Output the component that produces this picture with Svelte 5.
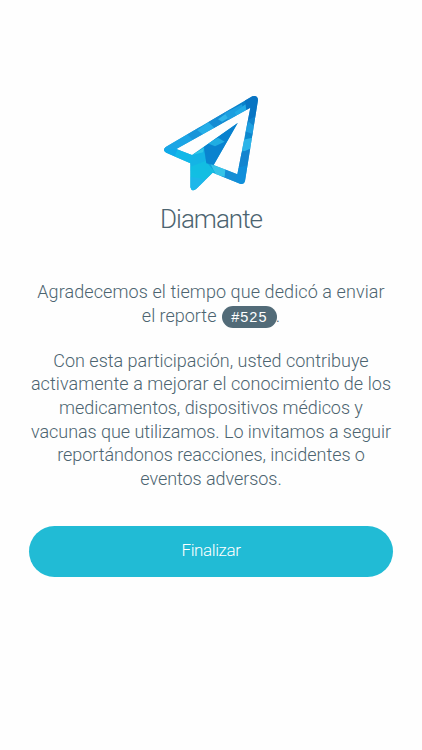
<script>
  const reportNumber = 525;

  const messageLines = [
    { text: 'Con esta participación, usted contribuye', spacing: -0.01 },
    { text: 'activamente a mejorar el conocimiento de los', spacing: 0.06 },
    { text: 'medicamentos, dispositivos médicos y', spacing: -0.04 },
    { text: 'vacunas que utilizamos. Lo invitamos a seguir', spacing: -0.05 },
    { text: 'reportándonos reacciones, incidentes o', spacing: -0.05 },
    { text: 'eventos adversos.', spacing: -0.06 }
  ];

  // Coloured facets of the logo, clipped to the plane outline
  const facets = [
    { points: '20,195 100,135 145,145 65,205', color: '#1fa5e8' },
    { points: '90,140 130,120 165,145 120,170', color: '#1c94da' },
    { points: '128,136 160,112 190,122 150,152', color: '#2bb5ed' },
    { points: '160,110 230,70 240,90 180,130', color: '#188bd4' },
    { points: '190,103 213,86 223,98 202,110', color: '#39c0f0' },
    { points: '210,85 262,58 268,85 225,108', color: '#22a5e4' },
    { points: '240,82 273,58 288,74 250,100', color: '#29b6ed' },
    { points: '270,40 315,20 315,105 280,110', color: '#0872c2' },
    { points: '270,110 310,90 304,155 268,145', color: '#1185ce' },
    { points: '282,110 302,126 292,146 270,139', color: '#22a5e5' },
    { points: '262,165 300,157 287,205 258,195', color: '#35bfee' },
    { points: '255,205 290,190 280,255 248,245', color: '#1681cf' },
    { points: '245,250 280,240 276,305 238,300', color: '#118ddb' },
    { points: '205,245 245,250 245,305 200,275', color: '#188bd4' },
    { points: '168,238 212,252 210,275 184,270', color: '#40cdec' },
    { points: '20,195 65,190 112,210 108,240', color: '#0fabec' },
    { points: '68,194 112,207 120,245 60,215', color: '#12bdeb' },
    { points: '107,212 147,190 155,232 107,258', color: '#16b8e8' },
    { points: '107,245 153,228 180,260 107,320', color: '#13c5e4' },
    { points: '107,275 135,280 160,290 107,322', color: '#20bbed' },
    { points: '148,185 250,110 180,240 155,235', color: '#087ecd' },
    { points: '158,175 190,158 210,170 181,184', color: '#25b3e5' },
    { points: '112,210 148,188 145,202', color: '#39d1ea' }
  ];
</script>

<main class="screen">
  <header class="brand">
    <svg class="logo" viewBox="-2 0 345 345" aria-hidden="true">
      <defs>
        <linearGradient id="base" x1="0" y1="1" x2="1" y2="0">
          <stop offset="0" stop-color="#16bdea" />
          <stop offset="1" stop-color="#0872c2" />
        </linearGradient>
        <clipPath id="plane">
          <path
            clip-rule="evenodd"
            d="M293 34 L33 186 Q22 195 34 203 L107 235 V307 Q111 322 124 313 L174 263 L256 296 Q268 299 271 288 L310 45 Q309 30 293 34 Z M287 68 L248 268 L177 240 L250 113 L112 210 L65 192 Z"
          />
        </clipPath>
      </defs>
      <g clip-path="url(#plane)">
        <rect width="345" height="345" fill="url(#base)" />
        <g opacity="0.8">
          {#each facets as facet}
            <polygon points={facet.points} fill={facet.color} />
          {/each}
        </g>
      </g>
    </svg>
    <h1>Diamante</h1>
  </header>

  <section class="message">
    <p>
      <span class="line intro">Agradecemos el tiempo que dedicó a enviar</span>
      <span class="line">el reporte <span class="badge">#{reportNumber}</span>.</span>
    </p>
    <p>
      {#each messageLines as line}
        <span class="line" style="letter-spacing: {line.spacing}px">{line.text}</span>
      {/each}
    </p>
  </section>

  <button type="button" class="finish">Finalizar</button>
</main>

<style>
  :global(body) {
    margin: 0;
    background: #fff;
  }

  .screen {
    box-sizing: border-box;
    height: 750px;
    padding: 85px 29px 0;
    overflow: hidden;
    background: #fefefe;
    color: #4c6470;
    font-family: Roboto, sans-serif;
    font-weight: 300;
    text-align: center;
  }

  .brand {
    display: flex;
    flex-direction: column;
    align-items: center;
  }

  .logo {
    width: 115px;
    height: 115px;
    display: block;
  }

  h1 {
    margin: 3px 0 0;
    font-size: 26px;
    line-height: 32px;
    font-weight: 300;
    letter-spacing: -1px;
  }

  .message {
    margin-top: 45px;
    font-size: 18px;
    line-height: 23.65px;
  }

  p {
    margin: 0 0 21px;
  }

  .line {
    display: block;
    white-space: nowrap;
  }

  .intro {
    letter-spacing: 0.09px;
  }

  .badge {
    display: inline-block;
    box-sizing: border-box;
    width: 55px;
    height: 22px;
    margin: 0 -1px 0 1px;
    border-radius: 11px;
    background: #526b78;
    color: #fff;
    font-family: "Liberation Sans", sans-serif;
    font-size: 14.5px;
    font-weight: 400;
    line-height: 22px;
    letter-spacing: 1px;
  }

  .finish {
    display: block;
    width: 364px;
    height: 51px;
    margin-top: 35px;
    padding: 0 0 2px;
    border: 0;
    border-radius: 26px;
    background: #21bbd5;
    color: #fff;
    font: 300 17px Roboto, sans-serif;
    letter-spacing: -0.4px;
  }
</style>
